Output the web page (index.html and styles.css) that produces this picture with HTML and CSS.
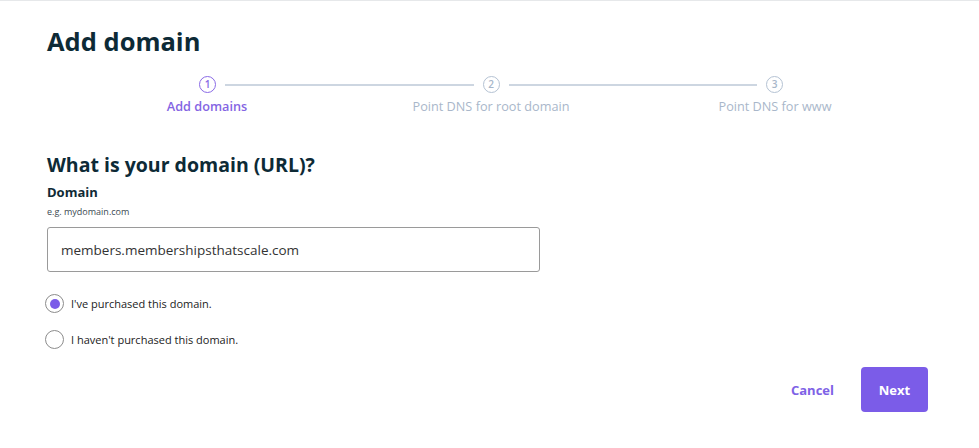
FILE: index.html
```html
<!DOCTYPE html>
<html lang="en">
<head>
<meta charset="utf-8">
<title>Add domain</title>
<link rel="stylesheet" href="styles.css">
</head>
<body>
<main class="page">
  <h1 class="title">Add domain</h1>
  <div class="stepper">
    <div class="step-track">
      <span class="step-num active">1</span>
      <span class="step-line"></span>
      <span class="step-num">2</span>
      <span class="step-line"></span>
      <span class="step-num">3</span>
    </div>
    <div class="step-labels">
      <span class="step-label active">Add domains</span>
      <span class="step-label">Point DNS for root domain</span>
      <span class="step-label">Point DNS for www</span>
    </div>
  </div>

  <h2 class="question">What is your domain (URL)?</h2>
  <label class="field-label" for="domain">Domain</label>
  <div class="field-hint">e.g. mydomain.com</div>
  <input class="text-input" id="domain" type="text" value="members.membershipsthatscale.com">

  <div class="radios">
    <label class="radio-row"><span class="radio checked"></span><span>I've purchased this domain.</span></label>
    <label class="radio-row"><span class="radio"></span><span>I haven't purchased this domain.</span></label>
  </div>

  <div class="actions">
    <button class="btn-cancel" type="button">Cancel</button>
    <button class="btn-next" type="button">Next</button>
  </div>
</main>
</body>
</html>
```
FILE: styles.css
```css
* { box-sizing: border-box; }
html, body { margin: 0; padding: 0; background: #fff; }
body {
  font-family: "Open Sans", "Noto Sans", sans-serif;
  color: #0f2a35;
  border-top: 1px solid #e6e8ea;
  height: 448px;
  overflow: hidden;
}
.page {
  padding: 0 51px 0 47px;
}
.title {
  margin: 22px 0 0;
  font-size: 25.5px;
  line-height: 36px;
  font-weight: 700;
  color: #0d2a36;
}
.stepper {
  margin-top: 17px;
}
.step-track {
  display: flex;
  align-items: center;
  margin-left: 152px;
  width: 584px;
}
.step-num {
  flex: none;
  width: 17px;
  height: 17px;
  border: 1.5px solid #b4c2d3;
  border-radius: 50%;
  color: #a7b6c9;
  font-size: 10px;
  font-weight: 600;
  line-height: 14px;
  text-align: center;
}
.step-num.active {
  border-color: #8a6ae6;
  color: #8a6ae6;
}
.step-line {
  flex: 1;
  height: 2px;
  background: #cdd6e1;
  margin: 0 9px;
}
.step-labels {
  display: grid;
  grid-template-columns: repeat(3, 284px);
  margin-left: 18px;
  margin-top: 4px;
}
.step-label {
  text-align: center;
  font-size: 12.7px;
  line-height: 18px;
  color: #a9b7ca;
}
.step-label.active {
  color: #8465e3;
  font-weight: 600;
}
.question {
  margin: 37px 0 0;
  font-size: 19.5px;
  line-height: 26px;
  font-weight: 700;
  color: #0d2a36;
}
.field-label {
  display: block;
  margin-top: 5px;
  font-size: 13px;
  line-height: 18px;
  font-weight: 700;
  color: #0f2a35;
}
.field-hint {
  margin-top: 5px;
  font-size: 9px;
  line-height: 12px;
  color: #3b4a52;
}
.text-input {
  display: block;
  margin-top: 9px;
  width: 493px;
  height: 45px;
  border: 1px solid #9a9a9a;
  border-radius: 3px;
  padding: 0 13px;
  font-family: inherit;
  font-size: 13.5px;
  color: #333;
  background: #fff;
  outline: none;
}
.radios {
  margin-top: 22px;
  display: flex;
  flex-direction: column;
  gap: 17px;
}
.radio-row {
  display: flex;
  align-items: center;
  gap: 7px;
  font-size: 11px;
  line-height: 18px;
  color: #222;
  margin-left: -2px;
}
.radio {
  flex: none;
  width: 19px;
  height: 19px;
  border: 1.5px solid #8c8c8c;
  border-radius: 50%;
  display: flex;
  align-items: center;
  justify-content: center;
}
.radio.checked::before {
  content: "";
  width: 10px;
  height: 10px;
  border-radius: 50%;
  background: #7b5ce8;
}
.actions {
  margin-top: 18px;
  display: flex;
  justify-content: flex-end;
  align-items: center;
  gap: 27px;
}
.btn-cancel {
  border: 0;
  background: none;
  padding: 0;
  font-family: inherit;
  font-size: 13px;
  font-weight: 700;
  color: #7e62e6;
}
.btn-next {
  width: 67px;
  height: 45px;
  border: 0;
  border-radius: 4px;
  background: #7b5ce8;
  color: #fff;
  font-family: inherit;
  font-size: 13px;
  font-weight: 700;
}
```
